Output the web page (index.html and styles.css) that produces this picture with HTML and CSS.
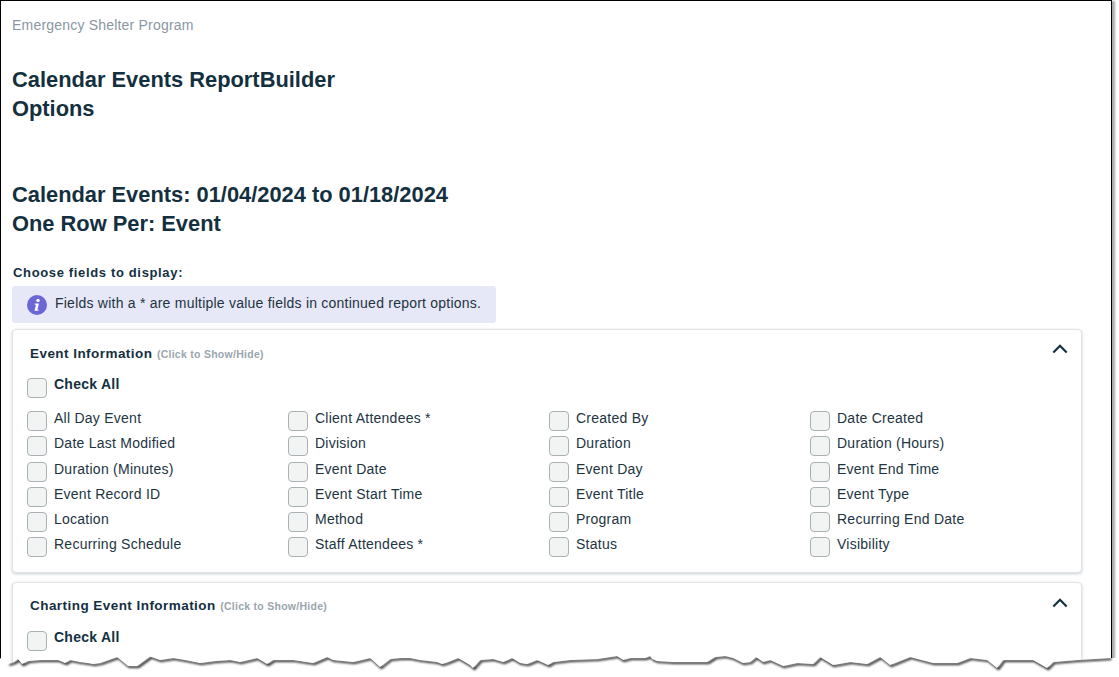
FILE: index.html
```html
<!DOCTYPE html>
<html lang="en">
<head>
<meta charset="utf-8">
<title>Calendar Events ReportBuilder Options</title>
<link rel="stylesheet" href="styles.css">
</head>
<body>
<div class="shot">
  <main class="window">
    <p class="program">Emergency Shelter Program</p>
    <h1 class="title">Calendar Events ReportBuilder<br>Options</h1>
    <h2 class="title sub">Calendar Events: 01/04/2024 to 01/18/2024<br>One Row Per: Event</h2>
    <p class="choose">Choose fields to display:</p>
    <div class="notice">
      <svg class="info" viewBox="0 0 20 20" aria-hidden="true"><circle cx="10" cy="10" r="10" fill="#6a66d6"/><circle cx="11" cy="5.4" r="1.7" fill="#fff"/><path d="M7.9 8.6h4l-1.5 6.1h1.3l-.3 1.1H7.5l1.5-6.1H7.6z" fill="#fff"/></svg>
      <span class="notice-text">Fields with a * are multiple value fields in continued report options.</span>
    </div>
    <section class="card">
      <header class="card-head">
        <span class="card-title">Event Information</span> <small class="hint">(Click to Show/Hide)</small>
        <svg class="chev" viewBox="0 0 14 9" aria-hidden="true"><path d="M1 7.6 7 1.6l6 6" fill="none" stroke="#14303f" stroke-width="2"/></svg>
      </header>
      <label class="field all"><i class="box"></i><span>Check All</span></label>
      <div class="grid">
        <label class="field"><i class="box"></i><span>All Day Event</span></label>
        <label class="field"><i class="box"></i><span>Client Attendees *</span></label>
        <label class="field"><i class="box"></i><span>Created By</span></label>
        <label class="field"><i class="box"></i><span>Date Created</span></label>
        <label class="field"><i class="box"></i><span>Date Last Modified</span></label>
        <label class="field"><i class="box"></i><span>Division</span></label>
        <label class="field"><i class="box"></i><span>Duration</span></label>
        <label class="field"><i class="box"></i><span>Duration (Hours)</span></label>
        <label class="field"><i class="box"></i><span>Duration (Minutes)</span></label>
        <label class="field"><i class="box"></i><span>Event Date</span></label>
        <label class="field"><i class="box"></i><span>Event Day</span></label>
        <label class="field"><i class="box"></i><span>Event End Time</span></label>
        <label class="field"><i class="box"></i><span>Event Record ID</span></label>
        <label class="field"><i class="box"></i><span>Event Start Time</span></label>
        <label class="field"><i class="box"></i><span>Event Title</span></label>
        <label class="field"><i class="box"></i><span>Event Type</span></label>
        <label class="field"><i class="box"></i><span>Location</span></label>
        <label class="field"><i class="box"></i><span>Method</span></label>
        <label class="field"><i class="box"></i><span>Program</span></label>
        <label class="field"><i class="box"></i><span>Recurring End Date</span></label>
        <label class="field"><i class="box"></i><span>Recurring Schedule</span></label>
        <label class="field"><i class="box"></i><span>Staff Attendees *</span></label>
        <label class="field"><i class="box"></i><span>Status</span></label>
        <label class="field"><i class="box"></i><span>Visibility</span></label>
      </div>
    </section>
    <section class="card second">
      <header class="card-head">
        <span class="card-title">Charting Event Information</span> <small class="hint">(Click to Show/Hide)</small>
        <svg class="chev" viewBox="0 0 14 9" aria-hidden="true"><path d="M1 7.6 7 1.6l6 6" fill="none" stroke="#14303f" stroke-width="2"/></svg>
      </header>
      <label class="field all"><i class="box"></i><span>Check All</span></label>
    </section>
  </main>
  <svg class="tear" viewBox="0 645 1119 32" aria-hidden="true">
    <defs>
      <clipPath id="below"><path d="M0 658L8 664 14 662 18 659 22 664 28 661 40 660 58 660 65 663 70 660 80 662 88 663 93 664 100 663 117 657 128 666 137 666 150 656.5 160 660 173 658 185 660 200 663 215 661 230 660 240 662 257 658 267 664 273 660 293 660 313 663 327 657 333 660 353 662 370 658 380 667 390 659 400 658 410 658 420 660 437 662 442 664 448 662 458 658 470 665 473 668 480 660 493 659 503 662 512 658 520 663 527 664 537 660 548 665 553 662 570 660 597 659 617 656 623 660 630 658 645 658 650 656 652 659 657 661 673 662 707 662 715 657 725 656 733 658 743 663 750 662 756 657 763 662 770 660 783 666 797 663 813 664 820 657 833 665 850 662 867 664 880 657 890 665 910 657 933 663 957 663 970 658 987 660 997 668 1003 660 1033 660 1047 668 1053 662 1077 660 1111 658 1119 658V677H0Z"/></clipPath>
      <filter id="soft" x="-1%" y="-100%" width="102%" height="300%"><feGaussianBlur stdDeviation=".8"/></filter>
    </defs>
    <path class="tear-fill" d="M0 658L8 664 14 662 18 659 22 664 28 661 40 660 58 660 65 663 70 660 80 662 88 663 93 664 100 663 117 657 128 666 137 666 150 656.5 160 660 173 658 185 660 200 663 215 661 230 660 240 662 257 658 267 664 273 660 293 660 313 663 327 657 333 660 353 662 370 658 380 667 390 659 400 658 410 658 420 660 437 662 442 664 448 662 458 658 470 665 473 668 480 660 493 659 503 662 512 658 520 663 527 664 537 660 548 665 553 662 570 660 597 659 617 656 623 660 630 658 645 658 650 656 652 659 657 661 673 662 707 662 715 657 725 656 733 658 743 663 750 662 756 657 763 662 770 660 783 666 797 663 813 664 820 657 833 665 850 662 867 664 880 657 890 665 910 657 933 663 957 663 970 658 987 660 997 668 1003 660 1033 660 1047 668 1053 662 1077 660 1111 658 1119 658V677H0Z"/>
    <g clip-path="url(#below)">
      <path class="tear-line" filter="url(#soft)" transform="translate(1.5 1)" d="M8 664 14 662 18 659 22 664 28 661 40 660 58 660 65 663 70 660 80 662 88 663 93 664 100 663 117 657 128 666 137 666 150 656.5 160 660 173 658 185 660 200 663 215 661 230 660 240 662 257 658 267 664 273 660 293 660 313 663 327 657 333 660 353 662 370 658 380 667 390 659 400 658 410 658 420 660 437 662 442 664 448 662 458 658 470 665 473 668 480 660 493 659 503 662 512 658 520 663 527 664 537 660 548 665 553 662 570 660 597 659 617 656 623 660 630 658 645 658 650 656 652 659 657 661 673 662 707 662 715 657 725 656 733 658 743 663 750 662 756 657 763 662 770 660 783 666 797 663 813 664 820 657 833 665 850 662 867 664 880 657 890 665 910 657 933 663 957 663 970 658 987 660 997 668 1003 660 1033 660 1047 668 1053 662 1077 660 1110 658"/>
    </g>
  </svg>
</div>
</body>
</html>
```
FILE: styles.css
```css
* { box-sizing: border-box; }
html, body { margin: 0; padding: 0; background: #fff; }
body { width: 1119px; height: 677px; overflow: hidden; font-family: "Liberation Sans", Arial, sans-serif; color: #14303f; }
.shot { position: relative; width: 1119px; height: 677px; overflow: hidden; }
.window { width: 1112px; height: 677px; border: 1px solid #000; border-width: 1px 1px 0; padding: 16px 29px 0 11px; box-shadow: 3px 1px 2px #aaa; overflow: hidden; background: #fff; }
.program { margin: 0; font-size: 14px; line-height: 17px; letter-spacing: .2px; color: #8a97a3; }
.title { margin: 31px 0 0; font-size: 21.85px; line-height: 29px; font-weight: 700; color: #14303f; }
.sub { margin-top: 57px; }
.choose { margin: 27px 0 0 1px; font-size: 13px; line-height: 16px; font-weight: 700; letter-spacing: .65px; color: #14303f; }
.notice { display: flex; align-items: center; gap: 8px; width: 484px; height: 37px; margin-top: 5px; padding-left: 15px; background: #e7e8f7; border-radius: 3px; font-size: 14px; letter-spacing: .23px; color: #22343f; }
.notice-text { margin-bottom: 4px; }
.info { width: 20px; height: 20px; flex: none; }
.card { height: 244px; margin-top: 6px; padding: 0 14px; border: 1px solid #e0e4e6; border-radius: 4px; background: #fff; box-shadow: 0 1px 3px rgba(40,60,70,.25); }
.second { height: 120px; margin-top: 9px; }
.card-head { position: relative; height: 47px; padding: 15px 0 0 3px; line-height: 16px; }
.second .card-head { padding-top: 14px; }
.card-title { font-size: 13.5px; font-weight: 700; letter-spacing: .45px; color: #14303f; }
.hint { font-size: 10.5px; font-weight: 700; letter-spacing: .27px; color: #9aa5ae; }
.chev { position: absolute; top: 14px; right: -1px; width: 16px; height: 10px; }
.second .chev { top: 15px; }
.field { display: flex; align-items: flex-start; gap: 7px; font-size: 14px; line-height: 17px; letter-spacing: .25px; color: #22343f; height: 25.3px; }
.all { font-weight: 700; color: #14303f; height: 33px; line-height: 15px; letter-spacing: .25px; }
.box { display: block; flex: none; width: 20px; height: 20px; margin-top: 1px; background: #f2f4f4; border: 1px solid #a9b1b5; border-radius: 4px; }
.grid { display: grid; grid-template-columns: repeat(4, 261px); }
.tear { position: absolute; left: 0; top: 645px; width: 1119px; height: 32px; }
.tear-fill { fill: #fff; }
.tear-line { fill: none; stroke: #222; stroke-width: 2.2; stroke-linejoin: round; }
```
